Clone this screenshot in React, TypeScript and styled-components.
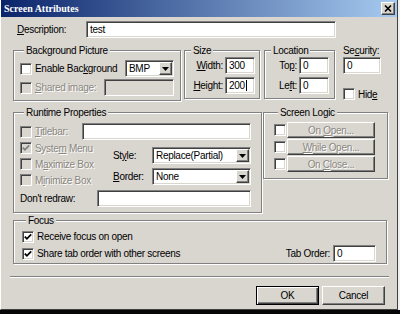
import * as React from 'react';
import styled, { createGlobalStyle, css } from 'styled-components';

const face = '#d9d6d0';

const GlobalStyle = createGlobalStyle`
  html, body {
    margin: 0;
    padding: 0;
    background: #f0f0f0;
  }
  * {
    box-sizing: border-box;
  }
`;

const sunken = css`
  border: 1px solid;
  border-color: #808080 #ffffff #ffffff #808080;
  box-shadow: inset 1px 1px 0 #404040, inset -1px -1px 0 ${face};
`;

const raised = css`
  border: 1px solid;
  border-color: #ffffff #404040 #404040 #ffffff;
  box-shadow: inset -1px -1px 0 #808080;
`;

const Desktop = styled.div`
  width: 400px;
  height: 314px;
  display: flex;
  flex-direction: column;
  overflow: hidden;
  background: #f0f0f0;
  font-family: "Liberation Sans", Arial, sans-serif;
  font-size: 10px;
  letter-spacing: -0.3px;
  color: #000;
`;

const Window = styled.div`
  width: 398px;
  height: 310px;
  flex: none;
  display: flex;
  flex-direction: column;
  background: ${face};
  border-left: 1px solid #ffffff;
  border-right: 1px solid #404040;
  border-bottom: 1px solid #404040;
`;

const Taskbar = styled.div`
  flex: 1;
  background: #060606;
`;

const TitleBar = styled.div`
  height: 17px;
  flex: none;
  display: flex;
  align-items: center;
  justify-content: space-between;
  padding: 0 2px 0 3px;
  background: linear-gradient(90deg, #0a246a 0%, #a6caf0 100%);
`;

const TitleText = styled.span`
  font-family: "Liberation Serif", serif;
  font-weight: bold;
  font-size: 10px;
  letter-spacing: 0;
  color: #ffffff;
`;

const CloseBtn = styled.span`
  ${raised};
  width: 14px;
  height: 13px;
  background: ${face};
  display: flex;
  align-items: center;
  justify-content: center;
`;

const Content = styled.div`
  flex: 1;
  display: flex;
  flex-direction: column;
  padding: 4px 12px 0 12px;
`;

const Row = styled.div<{ $gap?: number; $top?: number }>`
  display: flex;
  align-items: flex-start;
  gap: ${(p) => p.$gap ?? 0}px;
  margin-top: ${(p) => p.$top ?? 0}px;
`;

const DescRow = styled.div`
  display: flex;
  align-items: center;
  height: 17px;
  padding-left: 4px;
`;

const Label = styled.span<{ $w?: number; $right?: boolean; $dim?: boolean }>`
  flex: none;
  width: ${(p) => (p.$w ? `${p.$w}px` : 'auto')};
  text-align: ${(p) => (p.$right ? 'right' : 'left')};
  padding-right: ${(p) => (p.$right ? 2 : 0)}px;
  white-space: nowrap;
  color: ${(p) => (p.$dim ? '#8a8780' : '#000')};
  text-shadow: ${(p) => (p.$dim ? '1px 1px 0 #ffffff' : 'none')};
`;

const U = styled.span`
  text-decoration: underline;
`;

const TextBox = styled.div<{ $w?: number; $disabled?: boolean }>`
  ${sunken};
  flex: ${(p) => (p.$w ? 'none' : '1')};
  width: ${(p) => (p.$w ? `${p.$w}px` : 'auto')};
  height: 17px;
  padding: 0 3px;
  display: flex;
  align-items: center;
  background: ${(p) => (p.$disabled ? face : '#ffffff')};
  white-space: nowrap;
  overflow: hidden;
`;

const Caret = styled.span`
  display: inline-block;
  width: 1px;
  height: 11px;
  margin-left: 1px;
  background: #000;
`;

const DropBtn = styled.span`
  ${raised};
  flex: none;
  width: 13px;
  height: 13px;
  margin-left: auto;
  margin-right: -2px;
  background: ${face};
  display: flex;
  align-items: center;
  justify-content: center;
`;

const Group = styled.fieldset<{ $w: number; $pad: string }>`
  margin: 0;
  min-width: 0;
  flex: none;
  width: ${(p) => p.$w}px;
  padding: ${(p) => p.$pad};
  border: 1px solid #808080;
  box-shadow: inset 1px 1px 0 #ffffff, 1px 1px 0 #ffffff;
`;

const Legend = styled.legend`
  margin-left: 4px;
  padding: 0 2px;
  line-height: 11px;
  background: ${face};
`;

const GroupRow = styled.div<{ $h?: number; $top?: number; $between?: boolean }>`
  display: flex;
  align-items: center;
  justify-content: ${(p) => (p.$between ? 'space-between' : 'flex-start')};
  height: ${(p) => p.$h ?? 17}px;
  margin-top: ${(p) => p.$top ?? 0}px;
`;

const CheckWrap = styled.span<{ $w?: number }>`
  flex: none;
  display: flex;
  align-items: center;
  gap: 3px;
  width: ${(p) => (p.$w ? `${p.$w}px` : 'auto')};
`;

const Box = styled.span<{ $disabled?: boolean }>`
  ${sunken};
  flex: none;
  width: 12px;
  height: 12px;
  display: flex;
  align-items: center;
  justify-content: center;
  background: ${(p) => (p.$disabled ? face : '#ffffff')};
`;

const Column = styled.div<{ $w?: number; $gap?: number; $top?: number }>`
  display: flex;
  flex-direction: column;
  flex: ${(p) => (p.$w ? 'none' : '1')};
  width: ${(p) => (p.$w ? `${p.$w}px` : 'auto')};
  gap: ${(p) => p.$gap ?? 0}px;
  padding-top: ${(p) => p.$top ?? 0}px;
`;

const LogicButton = styled.span`
  ${raised};
  flex: none;
  width: 88px;
  height: 16px;
  margin-left: 1px;
  display: flex;
  align-items: center;
  justify-content: center;
  background: ${face};
  color: #8a8780;
  text-shadow: 1px 1px 0 #ffffff;
  white-space: pre;
`;

const Separator = styled.div`
  height: 2px;
  width: 379px;
  margin: 12px 0 0 -3px;
  border-top: 1px solid #808080;
  border-bottom: 1px solid #ffffff;
`;

const ButtonRow = styled.div`
  display: flex;
  justify-content: flex-end;
  gap: 3px;
  margin-top: 8px;
`;

const PushButton = styled.span<{ $default?: boolean }>`
  width: 63px;
  height: 19px;
  display: flex;
  align-items: center;
  justify-content: center;
  background: ${face};
  ${(p) =>
    p.$default
      ? css`
          border: 1px solid #000;
          box-shadow: inset 1px 1px 0 #ffffff, inset -1px -1px 0 #404040, inset -2px -2px 0 #808080;
        `
      : raised};
`;

function CheckMark({ disabled }: { disabled?: boolean }) {
  return (
    <svg width="8" height="8" viewBox="0 0 8 8">
      <polyline
        points="0.8,3.6 2.9,5.8 7.2,1.4"
        fill="none"
        stroke={disabled ? '#808080' : '#000'}
        strokeWidth="1.8"
      />
    </svg>
  );
}

function Check(props: {
  checked?: boolean;
  disabled?: boolean;
  w?: number;
  children?: React.ReactNode;
}) {
  const { checked, disabled, w, children } = props;
  return (
    <CheckWrap $w={w}>
      <Box $disabled={disabled}>{checked && <CheckMark disabled={disabled} />}</Box>
      {children && <Label $dim={disabled}>{children}</Label>}
    </CheckWrap>
  );
}

function Arrow() {
  return (
    <svg width="7" height="4" viewBox="0 0 7 4">
      <polygon points="0,0 7,0 3.5,4" fill="#000" />
    </svg>
  );
}

function Dropdown({ value, w }: { value: string; w?: number }) {
  return (
    <TextBox $w={w}>
      <span>{value}</span>
      <DropBtn>
        <Arrow />
      </DropBtn>
    </TextBox>
  );
}

export default function App() {
  return (
    <Desktop>
      <GlobalStyle />
      <Window>
        <TitleBar>
          <TitleText>Screen Attributes</TitleText>
          <CloseBtn>
            <svg width="8" height="7" viewBox="0 0 8 7">
              <path d="M1 0.5 L7 6.5 M7 0.5 L1 6.5" stroke="#000" strokeWidth="1.6" />
            </svg>
          </CloseBtn>
        </TitleBar>

        <Content>
          <DescRow>
            <Label $w={69}>
              <U>D</U>escription:
            </Label>
            <TextBox $w={250}>test</TextBox>
          </DescRow>

          <Row $top={7}>
            <Group $w={168} $pad="4px 6px 4px 6px">
              <Legend>Background Picture</Legend>
              <GroupRow $between>
                <Check>
                  Enable Bac<U>k</U>ground
                </Check>
                <Dropdown value="BMP" w={49} />
              </GroupRow>
              <GroupRow $between $top={2}>
                <Check disabled>
                  <U>S</U>hared image:
                </Check>
                <TextBox $w={70} $disabled />
              </GroupRow>
            </Group>

            <Group $w={76} $pad="1px 5px 4px 2px" style={{ marginLeft: 3 }}>
              <Legend>Size</Legend>
              <GroupRow>
                <Label $w={38} $right>
                  <U>W</U>idth:
                </Label>
                <TextBox $w={30}>300</TextBox>
              </GroupRow>
              <GroupRow $top={3}>
                <Label $w={38} $right>
                  <U>H</U>eight:
                </Label>
                <TextBox $w={30}>
                  200
                  <Caret />
                </TextBox>
              </GroupRow>
            </Group>

            <Group $w={71} $pad="1px 5px 4px 2px" style={{ marginLeft: 4 }}>
              <Legend>Location</Legend>
              <GroupRow>
                <Label $w={32} $right>
                  To<U>p</U>:
                </Label>
                <TextBox $w={30}>0</TextBox>
              </GroupRow>
              <GroupRow $top={3}>
                <Label $w={32} $right>
                  Le<U>f</U>t:
                </Label>
                <TextBox $w={30}>0</TextBox>
              </GroupRow>
            </Group>

            <Column $w={40} style={{ marginLeft: 8 }}>
              <Label style={{ lineHeight: '11px', height: 12 }}>
                Se<U>c</U>urity:
              </Label>
              <TextBox $w={38}>0</TextBox>
              <GroupRow $h={12} $top={14}>
                <Check>
                  Hid<U>e</U>
                </Check>
              </GroupRow>
            </Column>
          </Row>

          <Row $top={6} $gap={1}>
            <Group $w={249} $pad="0 10px 5px 6px">
              <Legend>Runtime Properties</Legend>
              <GroupRow $top={5}>
                <Check disabled w={62}>
                  <U>T</U>itlebar:
                </Check>
                <TextBox />
              </GroupRow>
              <Row>
                <Column $w={93}>
                  <GroupRow $h={16}>
                    <Check checked disabled>
                      Syste<U>m</U> Menu
                    </Check>
                  </GroupRow>
                  <GroupRow $h={16}>
                    <Check disabled>
                      M<U>a</U>ximize Box
                    </Check>
                  </GroupRow>
                  <GroupRow $h={16}>
                    <Check disabled>
                      M<U>i</U>nimize Box
                    </Check>
                  </GroupRow>
                </Column>
                <Column $top={7} $gap={4}>
                  <GroupRow>
                    <Label $w={39}>
                      St<U>y</U>le:
                    </Label>
                    <Dropdown value="Replace(Partial)" />
                  </GroupRow>
                  <GroupRow>
                    <Label $w={39}>
                      <U>B</U>order:
                    </Label>
                    <Dropdown value="None" />
                  </GroupRow>
                </Column>
              </Row>
              <GroupRow $top={2}>
                <Label $w={77}>Don't redraw:</Label>
                <TextBox />
              </GroupRow>
            </Group>

            <Group $w={125} $pad="4px 13px 6px 10px">
              <Legend>Screen Logic</Legend>
              <Column $gap={1}>
                <GroupRow $h={16}>
                  <Check />
                  <LogicButton>
                    <span>
                      On <U>O</U>pen...
                    </span>
                  </LogicButton>
                </GroupRow>
                <GroupRow $h={16}>
                  <Check />
                  <LogicButton>
                    <span>
                      <U>W</U>hile Open...
                    </span>
                  </LogicButton>
                </GroupRow>
                <GroupRow $h={16}>
                  <Check />
                  <LogicButton>
                    <span>
                      On <U>C</U>lose...
                    </span>
                  </LogicButton>
                </GroupRow>
              </Column>
            </Group>
          </Row>

          <Row $top={2}>
            <Group $w={374} $pad="2px 10px 1px 8px">
              <Legend>Focus</Legend>
              <GroupRow>
                <Check checked>Receive focus on open</Check>
              </GroupRow>
              <GroupRow $between>
                <Check checked>Share tab order with other screens</Check>
                <CheckWrap>
                  <Label>Tab Order:</Label>
                  <TextBox $w={43}>0</TextBox>
                </CheckWrap>
              </GroupRow>
            </Group>
          </Row>

          <Separator />

          <ButtonRow>
            <PushButton $default>OK</PushButton>
            <PushButton>Cancel</PushButton>
          </ButtonRow>
        </Content>
      </Window>
      <Taskbar />
    </Desktop>
  );
}
